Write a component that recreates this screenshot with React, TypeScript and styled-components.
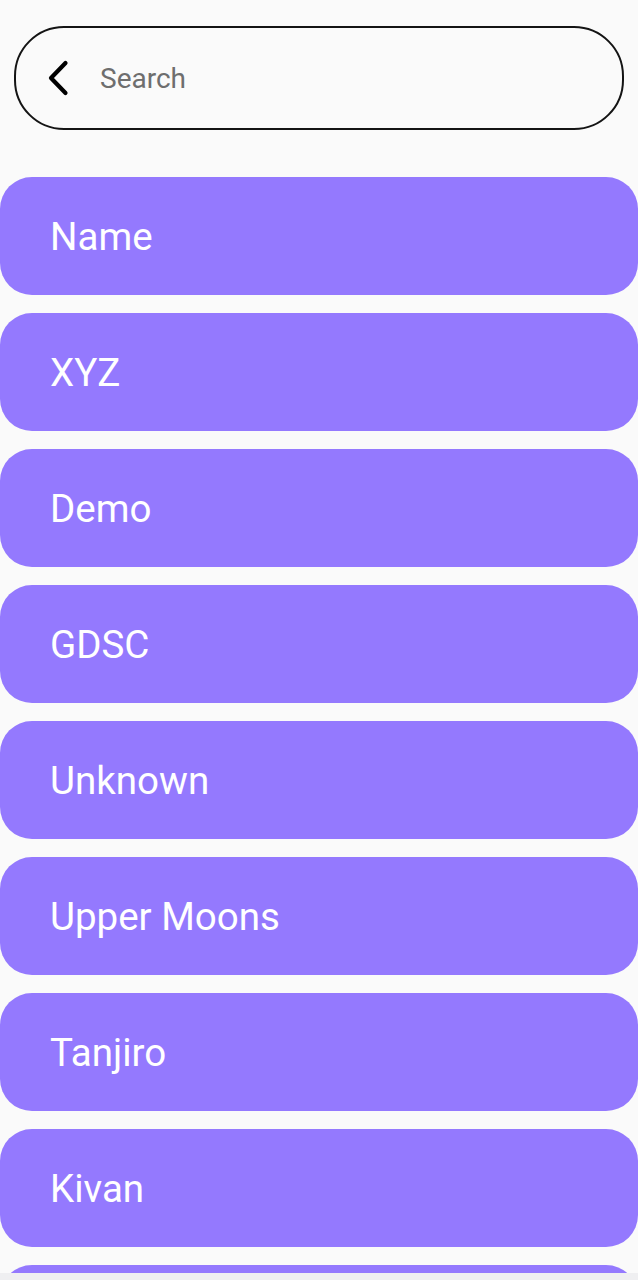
import React from "react";
import styled, { createGlobalStyle } from "styled-components";

const GlobalStyle = createGlobalStyle`
  body {
    margin: 0;
    background-color: #fafafa;
    font-family: Roboto, "Liberation Sans", sans-serif;
  }
`;

const Page = styled.div`
  display: flex;
  flex-direction: column;
  padding-top: 26px;
  height: 1280px;
  box-sizing: border-box;
  overflow: hidden;
`;

const SearchBar = styled.div`
  display: flex;
  align-items: center;
  gap: 30px;
  flex-shrink: 0;
  height: 104px;
  box-sizing: border-box;
  margin: 0 14px;
  padding: 0 0 0 30px;
  border: 2px solid #141414;
  border-radius: 50px;
`;

const BackButton = styled.button`
  display: flex;
  align-items: center;
  justify-content: center;
  padding: 0;
  border: none;
  background: none;
  cursor: pointer;
`;

const SearchInput = styled.input`
  flex: 1;
  min-width: 0;
  padding: 0;
  border: none;
  outline: none;
  background: transparent;
  font-family: Roboto, "Liberation Sans", sans-serif;
  font-size: 28px;
  color: #222;

  &::placeholder {
    color: #6e6e6e;
  }
`;

const List = styled.ul`
  display: flex;
  flex-direction: column;
  gap: 18px;
  list-style: none;
  margin: 47px 0 0;
  padding: 0;
`;

const Item = styled.li`
  display: flex;
  align-items: center;
  flex-shrink: 0;
  height: 118px;
  padding: 0 50px;
  border-radius: 32px;
  background-color: #9479fe;
  color: #fff;
  font-size: 38.5px;
`;

const NavStrip = styled.div`
  position: fixed;
  left: 0;
  right: 0;
  bottom: 0;
  height: 7px;
  background-color: #efeff1;
`;

// the last card only peeks in at the bottom edge
const names = ["Name", "XYZ", "Demo", "GDSC", "Unknown", "Upper Moons", "Tanjiro", "Kivan", ""];

export default function App() {
  return (
    <>
      <GlobalStyle />
      <Page>
        <SearchBar>
          <BackButton aria-label="back">
            <svg width="24" height="38" viewBox="0 0 24 38">
              <path d="M19.5 4 L5 19 L19.5 34" fill="none" stroke="#000" strokeWidth="4.2" strokeLinecap="round" strokeLinejoin="round" />
            </svg>
          </BackButton>
          <SearchInput placeholder="Search" />
        </SearchBar>
        <List>
          {names.map((n, i) => (
            <Item key={i}>{n}</Item>
          ))}
        </List>
      </Page>
      <NavStrip />
    </>
  );
}
